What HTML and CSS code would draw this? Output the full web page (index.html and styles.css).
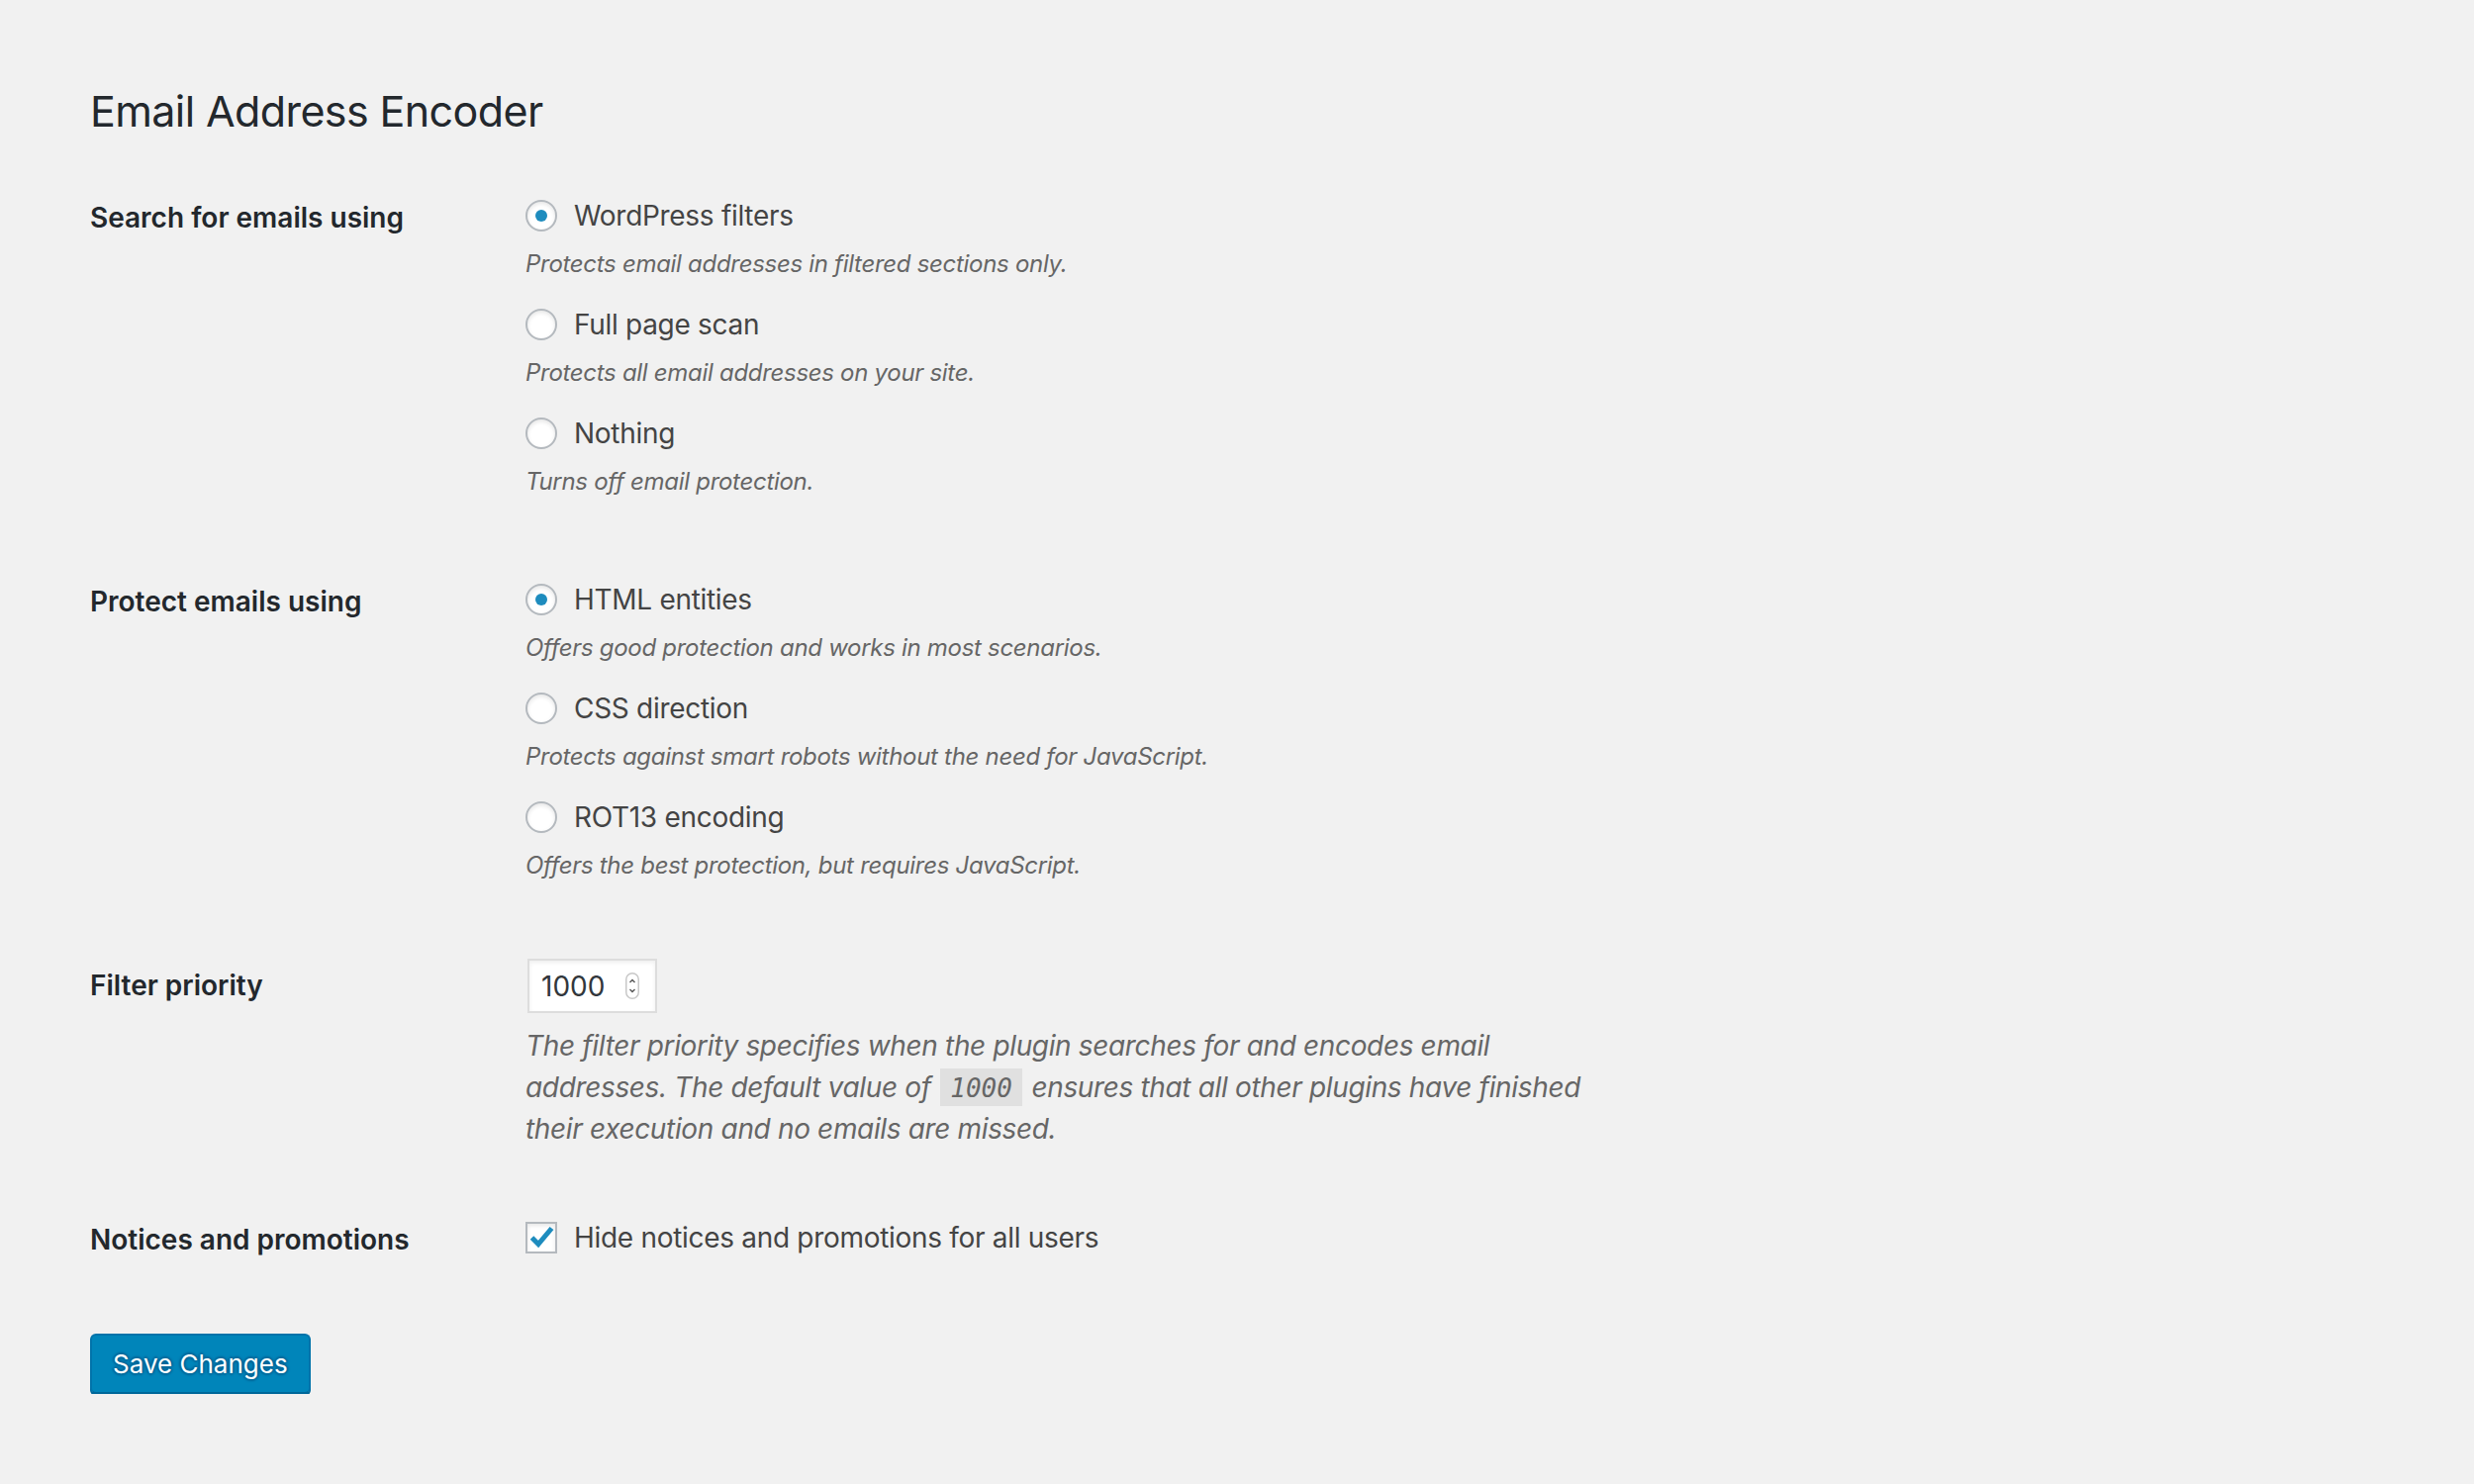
FILE: index.html
```html
<!DOCTYPE html>
<html lang="en">
<head>
 <meta charset="UTF-8">
 <title>Email Address Encoder</title>
 <link rel="stylesheet" href="styles.css">
</head>
<body>
 <div class="wrap">
  <h1>Email Address Encoder</h1>

  <form class="settings">
   <!-- where to look for addresses -->
   <div class="row row-search">
    <div class="row-label">Search for emails using</div>
    <div class="row-field">
     <div class="option">
      <label class="choice"><input type="radio" name="search" checked>WordPress filters</label>
      <p class="description">Protects email addresses in filtered sections only.</p>
     </div>
     <div class="option">
      <label class="choice"><input type="radio" name="search">Full page scan</label>
      <p class="description">Protects all email addresses on your site.</p>
     </div>
     <div class="option">
      <label class="choice"><input type="radio" name="search">Nothing</label>
      <p class="description">Turns off email protection.</p>
     </div>
    </div>
   </div>

   <!-- encoding technique -->
   <div class="row row-protect">
    <div class="row-label">Protect emails using</div>
    <div class="row-field">
     <div class="option">
      <label class="choice"><input type="radio" name="technique" checked>HTML entities</label>
      <p class="description">Offers good protection and works in most scenarios.</p>
     </div>
     <div class="option">
      <label class="choice"><input type="radio" name="technique">CSS direction</label>
      <p class="description">Protects against smart robots without the need for JavaScript.</p>
     </div>
     <div class="option">
      <label class="choice"><input type="radio" name="technique">ROT13 encoding</label>
      <p class="description">Offers the best protection, but requires JavaScript.</p>
     </div>
    </div>
   </div>

   <div class="row row-priority">
    <div class="row-label label-input">Filter priority</div>
    <div class="row-field">
     <div class="number">
      <span>1000</span>
      <svg class="spinner" width="14" height="27" viewBox="0 0 14 27">
       <rect x="0.75" y="0.75" width="12.5" height="25.5" rx="6.25" fill="#fff" stroke="#c8c8c8" stroke-width="1.5"/>
       <polyline points="4.5,10 7,7.5 9.5,10" fill="none" stroke="#555" stroke-width="1.4"/>
       <polyline points="4.5,17 7,19.5 9.5,17" fill="none" stroke="#555" stroke-width="1.4"/>
      </svg>
     </div>
     <p class="long-description">The filter priority specifies when the plugin searches for and encodes email addresses. The default value of <code>1000</code> ensures that all other plugins have finished their execution and no emails are missed.</p>
    </div>
   </div>

   <div class="row row-notices">
    <div class="row-label">Notices and promotions</div>
    <div class="row-field">
     <label class="choice">
      <span class="checkbox">
       <svg width="28" height="28" viewBox="0 0 28 28">
        <polyline points="4.5,14 11,20.5 24.5,4.5" fill="none" stroke="#1e8cbe" stroke-width="5"/>
       </svg>
      </span>
      Hide notices and promotions for all users
     </label>
    </div>
   </div>

   <div class="actions">
    <button type="button" class="button-primary">Save Changes</button>
   </div>
  </form>
 </div>
</body>
</html>
```

FILE: styles.css
```css
body {
  margin: 0;
  background: #f1f1f1;
  color: #444;
  font-family: Inter, "Noto Sans", sans-serif;
}

.wrap {
  padding: 82px 0 0 91px;
}

h1 {
  margin: 0 0 56px;
  font-size: 43px;
  font-weight: 400;
  line-height: 60px;
  letter-spacing: -0.6px;
  color: #23282d;
}

.settings {
  display: flex;
  flex-direction: column;
}

.row {
  display: grid;
  grid-template-columns: 440px 1fr;
}

.row-search {
  margin-bottom: 82px;
}

.row-protect {
  margin-bottom: 77px;
}

.row-priority {
  margin-bottom: 68px;
}

.row-label {
  font-size: 28px;
  font-weight: 600;
  line-height: 40px;
  padding-top: 2px;
  color: #23282d;
}

.row-label.label-input {
  line-height: 54px;
  padding-top: 0;
}

.option + .option {
  margin-top: 24px;
}

.choice {
  display: flex;
  align-items: center;
  gap: 17px;
  height: 40px;
  font-size: 28px;
  letter-spacing: -0.3px;
  color: #444;
}

.choice input[type=radio] {
  appearance: none;
  -webkit-appearance: none;
  display: flex;
  align-items: center;
  justify-content: center;
  flex: none;
  width: 32px;
  height: 32px;
  margin: 0;
  border: 2px solid #b4b9be;
  border-radius: 50%;
  background: #fff;
  box-shadow: inset 0 2px 4px rgba(0, 0, 0, 0.1);
}

.choice input[type=radio]:checked::before {
  content: "";
  width: 12px;
  height: 12px;
  border-radius: 50%;
  background: #1e8cbe;
}

.description {
  margin: 12px 0 0;
  font-size: 24px;
  line-height: 34px;
  letter-spacing: -0.3px;
  font-style: italic;
  color: #666;
}

.number {
  display: flex;
  align-items: center;
  justify-content: space-between;
  box-sizing: border-box;
  width: 131px;
  height: 55px;
  margin-left: 2px;
  padding: 0 16px 0 12px;
  border: 2px solid #ddd;
  background: #fff;
  box-shadow: inset 0 2px 4px rgba(0, 0, 0, 0.07);
  font-size: 28px;
  color: #32373c;
}

.long-description {
  max-width: 1100px;
  margin: 13px 0 0;
  font-size: 28px;
  line-height: 41.5px;
  letter-spacing: -0.35px;
  font-style: italic;
  color: #666;
}

code {
  margin: 0 2px;
  padding: 5px 10px 3px;
  background: rgba(0, 0, 0, 0.07);
  font-family: "DejaVu Sans Mono", "Liberation Mono", monospace;
  font-size: 26px;
  letter-spacing: 0;
}

.checkbox {
  display: flex;
  align-items: center;
  justify-content: center;
  box-sizing: border-box;
  flex: none;
  width: 32px;
  height: 32px;
  border: 2px solid #b4b9be;
  background: #fff;
  box-shadow: inset 0 2px 4px rgba(0, 0, 0, 0.1);
}

.actions {
  margin-top: 75px;
}

.button-primary {
  height: 61px;
  padding: 0 21px;
  border: 2px solid #0073aa;
  border-bottom-color: #006799;
  border-radius: 6px;
  background: #0085ba;
  box-shadow: 0 2px 0 #006799;
  color: #fff;
  font-family: Inter, "Noto Sans", sans-serif;
  font-size: 26px;
  text-shadow: 0 -2px 2px #006799, 2px 0 2px #006799, 0 2px 2px #006799, -2px 0 2px #006799;
  cursor: pointer;
}
```
